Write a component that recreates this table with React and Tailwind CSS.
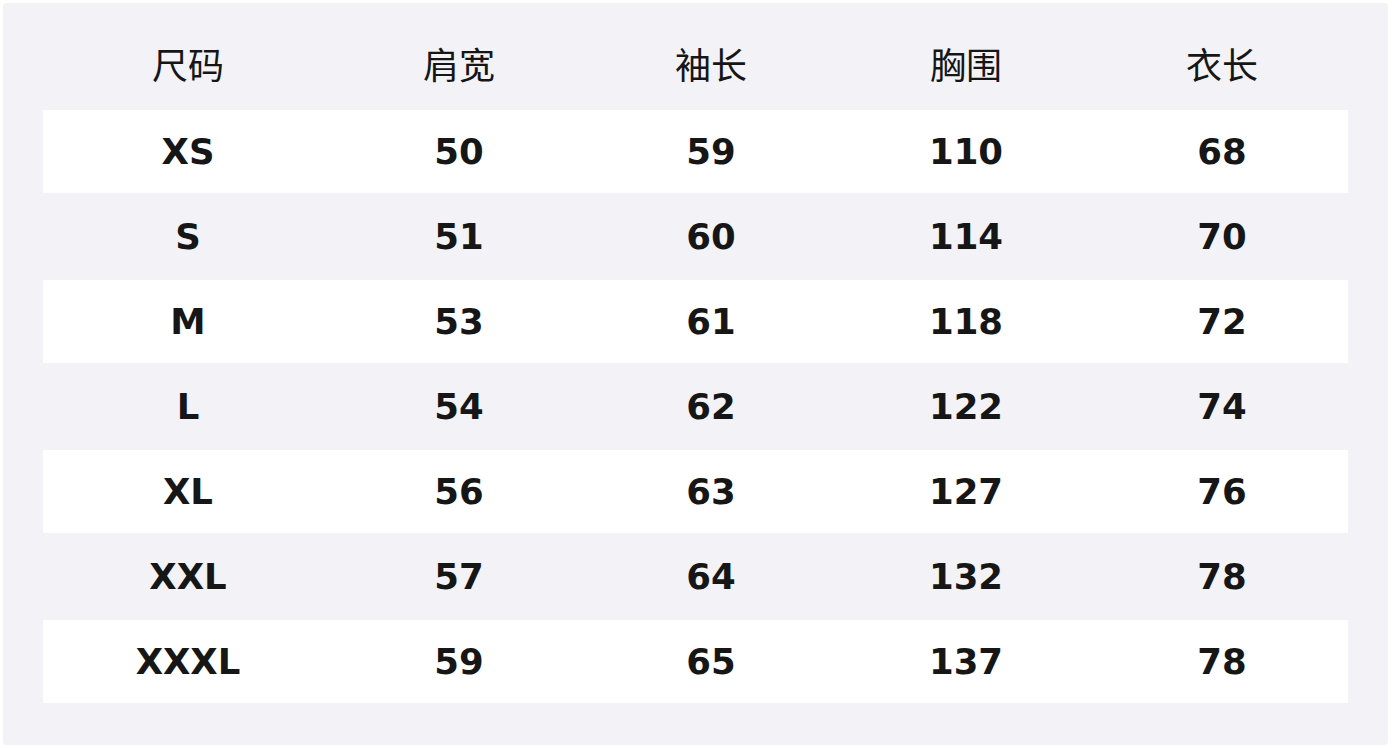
const headers = ['尺码', '肩宽', '袖长', '胸围', '衣长'];

const rows = [
  ['XS', '50', '59', '110', '68'],
  ['S', '51', '60', '114', '70'],
  ['M', '53', '61', '118', '72'],
  ['L', '54', '62', '122', '74'],
  ['XL', '56', '63', '127', '76'],
  ['XXL', '57', '64', '132', '78'],
  ['XXXL', '59', '65', '137', '78'],
];

const cols = 'grid grid-cols-[290px_252px_252px_258px_254px]';

export default function App() {
  return (
    <div className="w-[1392px] h-[748px] bg-white p-[3px] font-['DejaVu_Sans','Noto_Sans_CJK_SC',sans-serif] text-[#161616]">
      <div className="h-[742px] w-[1385px] bg-[#f2f2f7] rounded-[4px] px-[40px] pt-[21px]">
        <div className={`${cols} h-[86px] items-center text-[36px]`}>
          {headers.map((h) => (
            <div key={h} className="text-center">{h}</div>
          ))}
        </div>
        {rows.map((r, i) => (
          <div
            key={r[0]}
            className={`${cols} h-[85px] items-center border-b-2 border-[#f2f2f7] text-[35.5px] font-bold ${i % 2 === 0 ? 'bg-white' : ''}`}
          >
            {r.map((c, j) => (
              <div key={j} className="text-center">{c}</div>
            ))}
          </div>
        ))}
      </div>
    </div>
  );
}
